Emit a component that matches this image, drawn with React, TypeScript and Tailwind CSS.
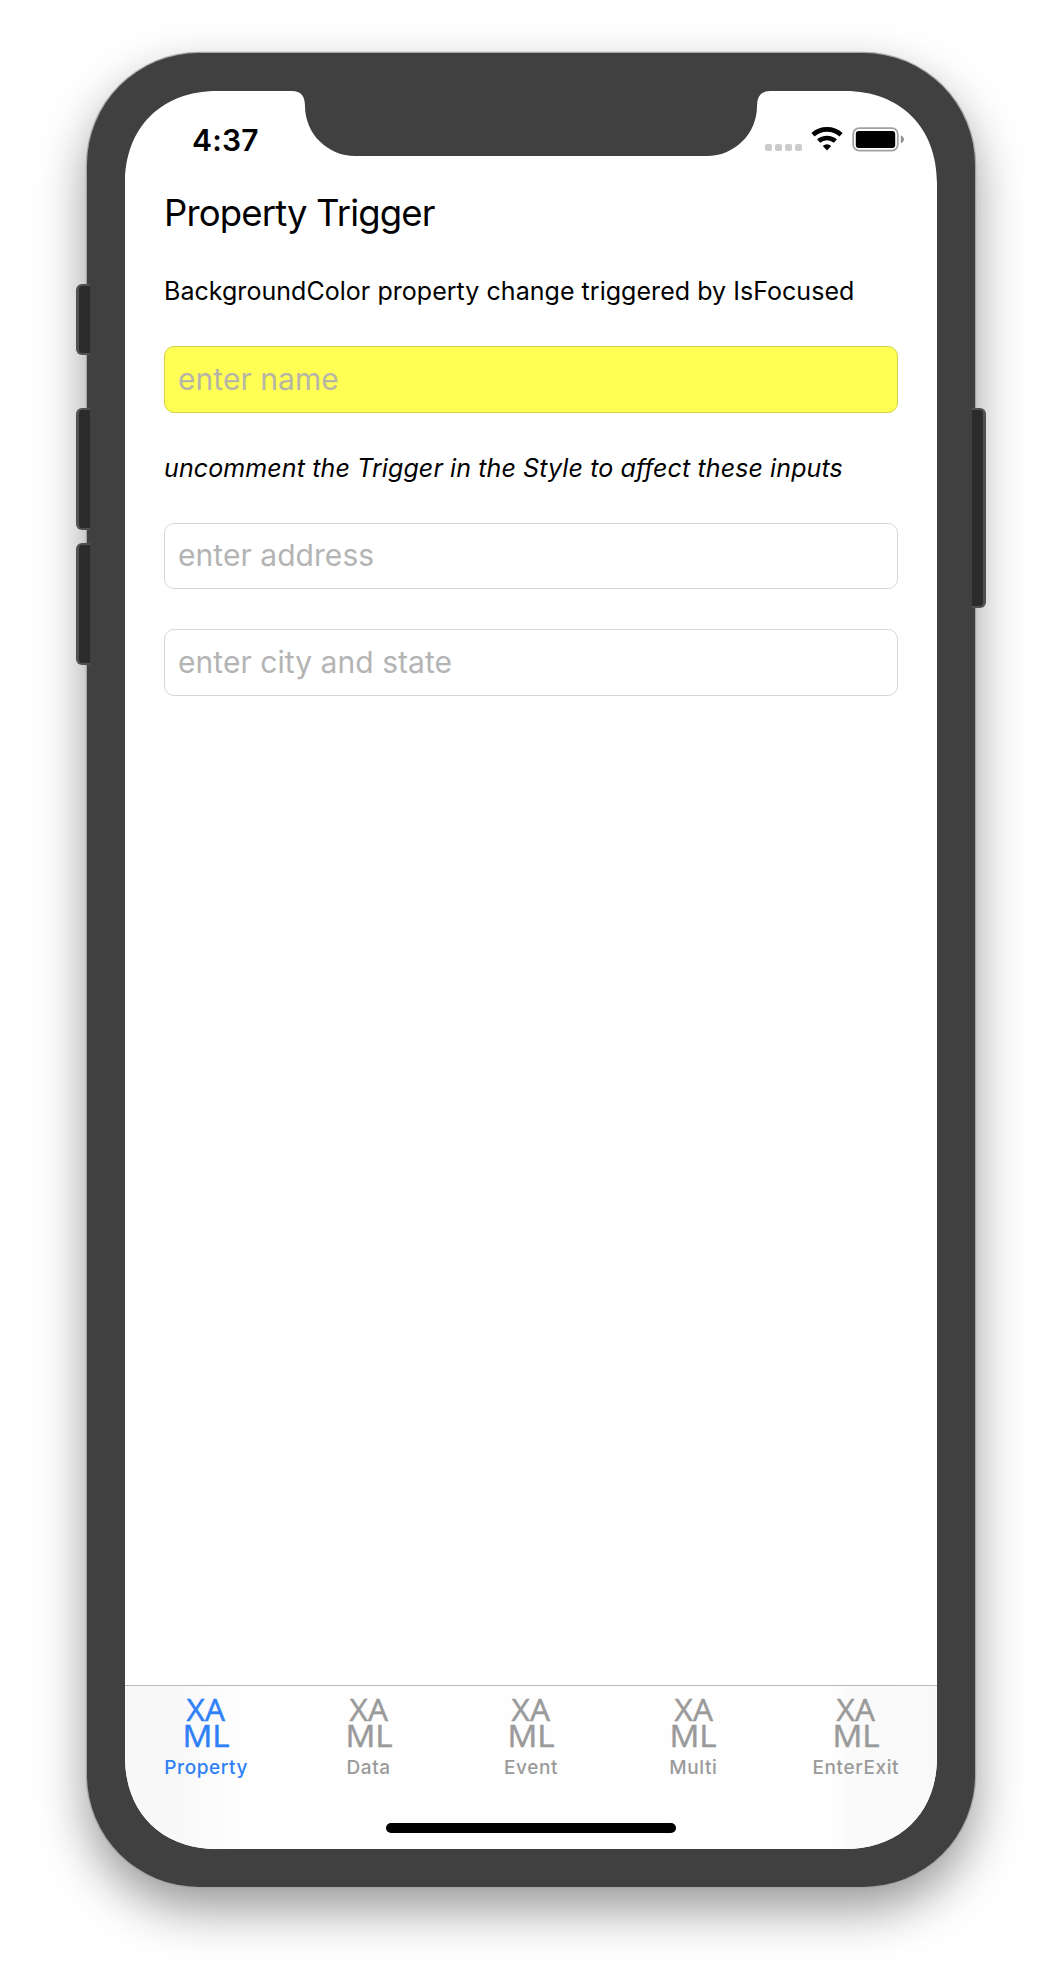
type Tab = { label: string; active?: boolean };

const tabs: Tab[] = [
  { label: "Property", active: true },
  { label: "Data" },
  { label: "Event" },
  { label: "Multi" },
  { label: "EnterExit" },
];

function SideButton({ className }: { className: string }) {
  return <div className={`absolute w-[14px] bg-[#2b2b2b] ${className}`} />;
}

function StatusIcons() {
  return (
    <div className="flex items-start">
      <div className="mt-[17px] mr-[9px] flex gap-[3px]">
        {[0, 1, 2, 3].map((i) => (
          <span key={i} className="size-[7px] rounded-[2px] bg-[#cbcbcb]" />
        ))}
      </div>
      <svg className="mr-[9px] h-6 w-8" viewBox="0 0 32 24" fill="none">
        <path d="M1.95 7.72A21.2 21.2 0 0 1 30.05 7.72" stroke="#000" strokeWidth="4.6" />
        <path d="M7.6 14.1A12.7 12.7 0 0 1 24.4 14.1" stroke="#000" strokeWidth="4.6" />
        <path d="M11.8 18.9A6.3 6.3 0 0 1 20.2 18.9L16 23.4Z" fill="#000" />
      </svg>
      <svg className="h-[25px] w-[53px]" viewBox="0 0 53 25" fill="none">
        <rect x="1.2" y="1.2" width="44.6" height="22.4" rx="6" stroke="#a0a0a0" strokeWidth="1.8" />
        <rect x="3.8" y="4" width="39.4" height="17" rx="3" fill="#000" />
        <path d="M48.8 8.6C50.6 9.2 51.9 10.6 51.9 12.4S50.6 15.6 48.8 16.2Z" fill="#8f8f8f" />
      </svg>
    </div>
  );
}

function Entry({ placeholder, focused }: { placeholder: string; focused?: boolean }) {
  return (
    <div
      className={`flex h-[66.5px] items-center rounded-[10px] border pl-[13px] text-[30px] tracking-[0.05px] ${
        focused
          ? "border-[#d2d14c] bg-[#fffe54] text-[#b7b6a6]"
          : "border-[#d6d6d6] bg-white text-[#b4b4b4]"
      }`}
    >
      {placeholder}
    </div>
  );
}

function TabItem({ label, active }: Tab) {
  return (
    <div className={`flex flex-col items-center ${active ? "text-[#2f80f7]" : "text-[#9a9a9a]"}`}>
      <div className="flex flex-col items-center font-['Open_Sans',sans-serif] text-[31px] leading-[26px] [-webkit-text-stroke:0.5px_currentColor]">
        <span className="scale-x-[1.02]">XA</span>
        <span className="scale-x-[1.07]">ML</span>
      </div>
      <span className="mt-[9px] text-[19px] leading-[22px] font-medium tracking-[0.6px]">{label}</span>
    </div>
  );
}

export default function App() {
  return (
    <main className="flex h-[1972px] w-[1062px] justify-center overflow-hidden bg-white pt-[53px] font-['Inter',sans-serif] text-black">
      <div className="relative h-[1834px] w-[888px] rounded-[112px] bg-[#404040] p-[38px] shadow-[0_0_0_1.2px_#a6a6a6,0_22px_50px_rgba(0,0,0,0.41)]">
        <SideButton className="top-[231px] -left-[11px] h-[71px] rounded-l-[6px] border-y-2 border-l-[3px] border-[#505050]" />
        <SideButton className="top-[355px] -left-[11px] h-[122px] rounded-l-[6px] border-y-2 border-l-[3px] border-[#505050]" />
        <SideButton className="top-[490px] -left-[11px] h-[122px] rounded-l-[6px] border-y-2 border-l-[3px] border-[#505050]" />
        <SideButton className="top-[355px] -right-[11px] h-[200px] rounded-r-[6px] border-y-2 border-r-[3px] border-[#505050]" />

        {/* Screen, cut to the rounded display outline with the sensor notch */}
        <div className="flex h-[1758px] w-[812px] flex-col bg-white [clip-path:path('M92_0H167Q180_0_180_15A50_50_0_0_0_230_65H582A50_50_0_0_0_632_15Q632_0_645_0H720C775.5_0_812_36.5_812_92V1666C812_1721.5_775.5_1758_720_1758H92C36.5_1758_0_1721.5_0_1666V92C0_36.5_36.5_0_92_0Z')]">
          <header className="flex h-[99px] items-start justify-between pr-[32px] pl-[67px]">
            <span className="mt-[31px] text-[30px] leading-[36px] font-semibold tracking-[0.2px]">4:37</span>
            <div className="mt-[36px]">
              <StatusIcons />
            </div>
          </header>

          <section className="flex flex-1 flex-col gap-10 px-[39px]">
            <h1 className="h-[46px] text-[36.5px] leading-[46px] tracking-[-0.85px]">Property Trigger</h1>
            <p className="text-[25px] leading-[30px] tracking-[0.04px]">
              BackgroundColor property change triggered by IsFocused
            </p>
            <Entry placeholder="enter name" focused />
            <p className="text-[25px] leading-[30px] tracking-[0.11px] italic">
              uncomment the Trigger in the Style to affect these inputs
            </p>
            <Entry placeholder="enter address" />
            <Entry placeholder="enter city and state" />
          </section>

          <footer className="flex h-[164px] flex-col items-center border-t border-[#b8b8b8] bg-[linear-gradient(to_right,#f8f8f8_0,#f9f9f9_60px,#fefefe_115px,#fefefe_710px,#fafafa_725px,#f9f9f9_812px)] pt-[10px]">
            <nav className="grid w-full grid-cols-5">
              {tabs.map((tab) => (
                <TabItem key={tab.label} {...tab} />
              ))}
            </nav>
            <div className="mt-[44px] h-[10px] w-[290px] shrink-0 rounded-full bg-black" />
          </footer>
        </div>
      </div>
    </main>
  );
}
